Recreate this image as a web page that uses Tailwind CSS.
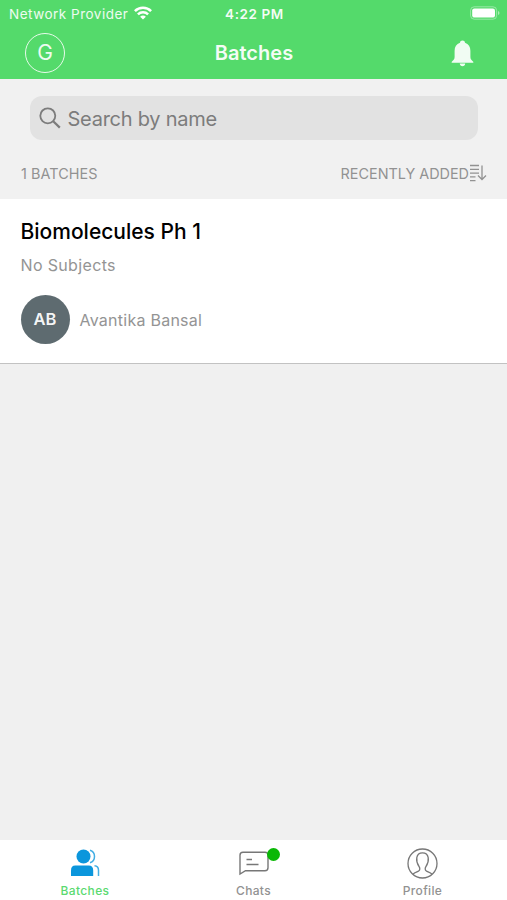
<!DOCTYPE html>
<html lang="en">
<head>
<meta charset="utf-8">
<meta name="viewport" content="width=device-width, initial-scale=1">
<title>Batches</title>
<script src="https://cdn.jsdelivr.net/npm/@tailwindcss/browser@4"></script>
</head>
<body class="h-[900px] w-[507px] overflow-hidden bg-[#f0f0f0] font-['Inter',sans-serif]">
<div class="flex h-full flex-col">
  <header class="h-[79px] shrink-0 bg-[#54da6b] text-white">
    <div class="grid h-7 grid-cols-3 items-center pr-[7px] pl-[9px] text-[13.5px]">
      <div class="flex items-center gap-[6px] whitespace-nowrap">
        <span class="text-[13.5px] tracking-[0.5px] text-white/90">Network Provider</span>
        <svg class="-mt-0.5 h-[14px] w-[18px]" viewBox="0 0 18 14" fill="none" stroke="currentColor" stroke-width="2.5"><path d="M.9 5.1C5.4.6 12.6.6 17.1 5.1"/><path d="M3.9 8.3c2.900-2.800 7.300-2.800 10.200 0"/><path d="M9 13.600 6.100 10.700c1.600-1.500 4.200-1.500 5.800 0z" fill="currentColor" stroke="none"/></svg>
      </div>
      <div class="text-center text-[13.5px] font-semibold tracking-[0.6px] text-white/95">4:22 PM</div>
      <svg class="-mt-0.5 h-[14px] w-[30px] justify-self-end" viewBox="0 0 30 14"><rect x=".6" y=".8" width="26" height="12.4" rx="3.600" fill="none" stroke="white" stroke-opacity=".4"/><rect x="2.200" y="2.400" width="22.800" height="9.200" rx="2.200" fill="white"/><path d="M28 5v4c2-.7 2-3.300 0-4" fill="white" fill-opacity=".5"/></svg>
    </div>
    <div class="grid h-[49px] grid-cols-3 items-center px-[25px]">
      <div class="flex size-10 items-center justify-center rounded-full border-[1.5px] border-white/85 text-[21px] text-white/90">G</div>
      <h1 class="pl-px text-center text-[20px] font-semibold tracking-[0.05px] text-white/95">Batches</h1>
      <svg class="mt-px mr-[8px] h-[27px] w-[23px] justify-self-end" viewBox="0 0 23 27" fill="white" fill-opacity=".92"><path d="M11.500.5c1.400 0 2.400.9 2.500 2.200 3.600 1.200 5.400 4.200 5.400 8v6.100c0 2.100.6 3.200 2.600 4.600.7.6.4 1.300-.4 1.300H1.400c-.8 0-1.100-.7-.4-1.300 2-1.400 2.600-2.500 2.600-4.600v-6.100c0-3.800 1.800-6.800 5.400-8C9.100 1.400 10.100.5 11.500.5z"/><path d="M8.800 23.600h5.400c0 3.600-5.400 3.600-5.400 0z"/></svg>
    </div>
  </header>

  <section class="h-[120px] shrink-0 bg-[#f1f1f1] pt-[17px]">
    <div class="mx-[30px] flex h-11 w-[448px] items-center rounded-[12px] bg-[#e2e2e2] pl-[9px] text-[#7c7c7c]">
      <svg class="size-[22px]" viewBox="0 0 22 22" fill="none" stroke="currentColor" stroke-width="1.800"><circle cx="8.800" cy="8.800" r="7.500"/><path d="m14.200 14.200 6.600 6.400" stroke-width="2.200"/></svg>
      <span class="mt-px ml-[6.500px] text-[20px] tracking-[-0.25px]">Search by name</span>
    </div>
    <div class="mt-[22px] flex h-[22px] items-center justify-between pr-[20px] pl-[21px] text-[14.4px] text-[#929292]">
      <span class="mt-0.5 tracking-[0.05px]">1 BATCHES</span>
      <div class="flex items-center"><span class="mt-0.5">RECENTLY ADDED</span>
        <svg class="h-[18px] w-[18px]" viewBox="0 0 18 18" fill="none" stroke="currentColor" stroke-width="1.300"><path d="M1 1.500h9M1 5.300h9M1 9.100h9M1 12.900h5.500M1 16.700h5.500M13 1.500v14m-4-4 4 4 4-4"/></svg>
      </div>
    </div>
  </section>

  <article class="h-[165px] shrink-0 border-b-[1.5px] border-[#c2c2c2] bg-white pt-[19px] pl-[20.500px]">
    <h2 class="text-[21px] leading-[28px] font-medium text-black">Biomolecules Ph 1</h2>
    <p class="mt-[7px] text-[16px] leading-6 tracking-[0.35px] text-[#949494]">No Subjects</p>
    <div class="mt-[18px] flex items-center gap-[10px]">
      <div class="flex size-[49px] items-center justify-center rounded-full bg-[#5e6b70] text-[16.500px] font-semibold text-white/95">AB</div>
      <span class="text-[16px] tracking-[0.25px] text-[#949494]">Avantika Bansal</span>
    </div>
  </article>

  <main class="grow"></main>

  <nav class="grid h-[60px] shrink-0 grid-cols-3 bg-white text-[12px] font-medium tracking-[0.35px] text-[#929292]">
    <div class="flex flex-col items-center pt-[8px] text-[#5bda70]">
      <svg class="h-[30px] w-[32px]" viewBox="0 0 32 30" fill="#0b96dc"><circle cx="14.500" cy="8.500" r="7"/><path d="M2 28v-5.500c0-3.200 1.400-5 4.300-5h13.400c3 0 4.500 1.800 4.500 5V28z"/><path d="M21 2.200c6 1.800 6 10.800 0 12.600M25.500 17.700c2.700.2 4 1.800 4 4.500V28" fill="none" stroke="#42aee4" stroke-width="1.500"/></svg>
      <span class="mt-[5px] ml-px leading-4">Batches</span>
    </div>
    <div class="flex flex-col items-center pt-[8px]">
      <div class="relative">
        <svg class="h-[30px] w-[32px]" viewBox="0 0 32 30" fill="none" stroke="#777" stroke-width="1.400"><path d="M5 4.200h22c1.800 0 3 1.200 3 3v12.500c0 1.800-1.200 3-3 3H7.500L2 26V7.200c0-1.800 1.200-3 3-3zM8.500 11.500H14M8.500 16.500h12"/></svg>
        <span class="absolute top-0 left-[29px] size-[13px] rounded-full bg-[#0ab806]"></span>
      </div>
      <span class="mt-[5px] leading-4">Chats</span>
    </div>
    <div class="flex flex-col items-center pt-[8px]">
      <svg class="h-[31px] w-[31px]" viewBox="0 0 31 31" fill="none" stroke="#777" stroke-width="1.300"><circle cx="15.500" cy="15.500" r="14.500"/><path d="M6 26.200c1.500-1.700 4.200-2.300 5.700-3.200 1.500-.9 1.300-2.900.4-4.300-1.800-2.600-2.800-5.900-2.300-9 .5-3 2.500-4.800 5.700-4.800s5.200 1.800 5.700 4.800c.5 3.100-.5 6.400-2.300 9-.9 1.400-1.100 3.400.4 4.300 1.500.9 4.200 1.500 5.700 3.200"/></svg>
      <span class="mt-[4px] leading-4">Profile</span>
    </div>
  </nav>
</div>
</body>
</html>
